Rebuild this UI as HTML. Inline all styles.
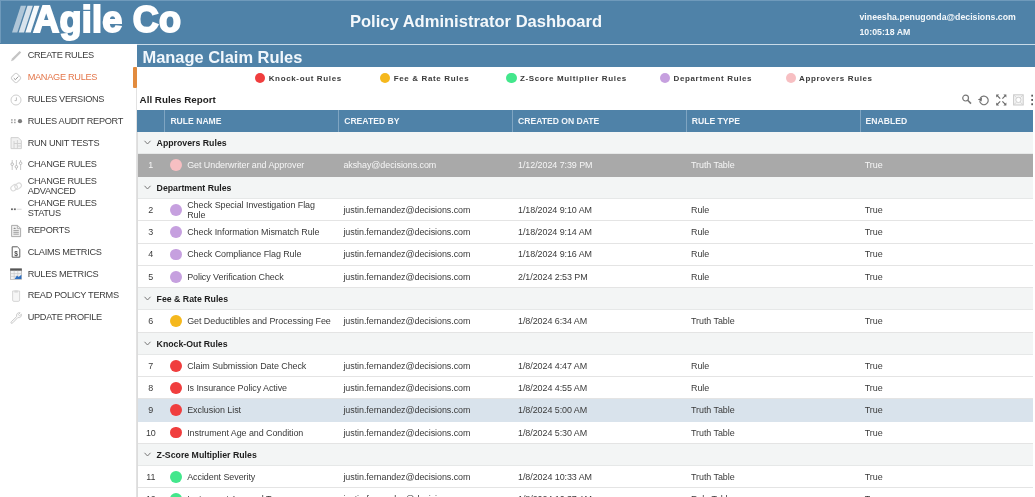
<!DOCTYPE html>
<html lang="en">
<head>
<meta charset="utf-8">
<title>Policy Administrator Dashboard</title>
<style>
*{box-sizing:border-box;margin:0;padding:0}
html,body{width:1035px;height:497px;overflow:hidden;background:#fff}
body{position:relative;filter:blur(.45px);font-family:"Liberation Sans",Arial,Helvetica,sans-serif;color:#333;font-size:8.8px}
.abs{position:absolute}
/* top header */
#hdr{left:0;top:0;width:1035px;height:43.5px;background:#4f82a8}
#hdr .edge-t{left:0;top:0;width:1035px;height:1px;background:#6f9abb}
#hdr .edge-l{left:0;top:0;width:1px;height:43px;background:#6f9abb}
#logo-slashes{left:10px;top:4px}
#logo{left:33.3px;top:-1.9px;font-weight:bold;font-size:36px;line-height:44px;color:#fff;letter-spacing:.25px;white-space:nowrap;-webkit-text-stroke:1.9px #fff}
#apptitle{left:350px;top:11.7px;font-weight:bold;font-size:16.55px;line-height:20px;color:#f4f8fb;white-space:nowrap}
#user{left:859.5px;top:11px;font-weight:bold;font-size:8.75px;line-height:12px;color:#f4f8fb;white-space:nowrap}
#time{left:859.5px;top:26px;font-weight:bold;font-size:8.75px;line-height:12px;color:#f4f8fb;white-space:nowrap}
/* page title bar */
#sepline{left:136.6px;top:43.6px;width:898px;height:1.5px;background:#c9dbe8}
#ptitle{left:136.6px;top:45px;width:898.4px;height:21.5px;background:#4f82a8;color:#f1f7fc;font-weight:bold;font-size:16.45px;line-height:24px;padding-left:5.9px;white-space:nowrap;overflow:hidden}
/* sidebar */
#side{left:0;top:45.1px;width:137px;height:453px}
#sideline{left:136px;top:66.5px;width:1px;height:431px;background:#e2e2e2}
.mi{position:relative;height:21.85px;display:flex;align-items:center;padding-left:27.7px;font-size:9.2px;line-height:9.7px;color:#3c3c3c;letter-spacing:-.3px}
.mi svg{position:absolute;left:9.2px;top:3.8px;width:14px;height:14px;overflow:visible}
.mi.on{color:#e4764a}
#marker{left:133.2px;top:66.8px;width:3.6px;height:21.7px;background:#e28b3e;border-radius:1px}
/* legend */
.lg{top:72.7px;height:10.2px;white-space:nowrap;font-weight:bold;font-size:8px;letter-spacing:.64px;line-height:11.6px;color:#3a3a3a;padding-left:13.5px}
.lg i{position:absolute;left:0;top:0;width:10.2px;height:10.2px;border-radius:50%}
/* report */
#rtitle{left:139.6px;top:93.5px;font-weight:bold;font-size:9.8px;line-height:12px;color:#1f1f1f;white-space:nowrap}
#tools{left:958px;top:92px;width:77px;height:16px}
#grid{left:137px;top:110.2px;width:896px;border-left:1px solid #dcdcdc}
.hd{height:22px;background:#4f82a8;color:#f2f6fa;font-weight:bold;font-size:8.6px;display:flex;margin-left:-1px}
.hd div{height:22px;line-height:22.6px;padding-left:5px;border-left:1px solid #7fa5c2;white-space:nowrap}
.hd div:first-child{border-left:0;width:27.4px;padding:0}
.hd div.c{width:173.8px}
.gr{height:22.27px;background:#f3f5f5;border-bottom:1px solid #e6e8e8;font-weight:bold;font-size:8.75px;color:#1d1d1d;line-height:23.4px;padding-left:18.6px;position:relative;overflow:hidden;white-space:nowrap}
.gr svg{position:absolute;left:5.5px;top:8px;width:7px;height:5px;overflow:visible}
.rw{height:22.27px;border-bottom:1px solid #e4e4e4;display:flex;align-items:center;font-size:8.95px;padding-top:.6px;color:#3a3a3a;line-height:10px;letter-spacing:-.06px;background:#fff}
.rw .n{width:25.6px;text-align:center;flex:none}
.rw .nm{width:173.8px;flex:none;display:flex;align-items:center;padding-left:6.5px}
.rw .nm i{flex:none;width:11.8px;height:11.8px;border-radius:50%;margin-right:5.3px}
.rw .nm span{display:block;width:135px}
.rw .c{width:173.8px;flex:none;padding-left:6px;white-space:nowrap}
.rw .c:nth-child(4){padding-left:6.8px}
.rw.sel{background:#a9a9a9;color:#f6f6f6;border-bottom-color:#a9a9a9}
.rw.hov{background:#d9e3ec;border-bottom-color:#d9e3ec}
.red{background:#f03e3e}.yel{background:#f5b81d}.grn{background:#43e78c}.pur{background:#c6a0df}.pnk{background:#f7bfc2}
</style>
</head>
<body>
<div id="hdr" class="abs">
  <div class="abs edge-t"></div><div class="abs edge-l"></div>
  <svg id="logo-slashes" class="abs" width="30" height="32" viewBox="0 0 30 32">
    <polygon points="2,28.4 7.3,28.4 16.1,1.8 10.8,1.8" fill="#fff" fill-opacity=".55"/>
    <polygon points="8.7,28.4 14,28.4 22.8,1.8 17.5,1.8" fill="#fff" fill-opacity=".78"/>
    <polygon points="15.4,28.4 20.7,28.4 29.5,1.8 24.2,1.8" fill="#fff" fill-opacity=".95"/>
  </svg>
  <div id="logo" class="abs">Agile Co</div>
  <div id="apptitle" class="abs">Policy Administrator Dashboard</div>
  <div id="user" class="abs">vineesha.penugonda@decisions.com</div>
  <div id="time" class="abs">10:05:18 AM</div>
</div>
<div id="sepline" class="abs"></div>
<div id="ptitle" class="abs">Manage Claim Rules</div>

<div id="side" class="abs">
  <div class="mi"><svg viewBox="0 0 14 14"><path d="M2 12.2 L3 9.6 L10.6 2 L12.2 3.6 L4.6 11.2 Z" fill="#c4c4c4"/></svg>CREATE RULES</div>
  <div class="mi on"><svg viewBox="0 0 14 14"><rect x="3.2" y="3.2" width="7.6" height="7.6" rx="1.6" transform="rotate(45 7 7)" fill="none" stroke="#cfcfcf" stroke-width="1"/><path d="M4.8 7.2 L6.4 8.7 L9.3 5.6" fill="none" stroke="#9a9a9a" stroke-width="1"/></svg>MANAGE RULES</div>
  <div class="mi"><svg viewBox="0 0 14 14"><circle cx="7" cy="7" r="5" fill="none" stroke="#cfcfcf" stroke-width="1"/><path d="M7.4 4.4 V7.6 H5.6" fill="none" stroke="#bdbdbd" stroke-width="1"/></svg>RULES VERSIONS</div>
  <div class="mi"><svg viewBox="0 0 14 14"><g fill="#9c9c9c"><rect x="2.1" y="5.2" width="1.5" height="1.5"/><rect x="2.1" y="7.7" width="1.5" height="1.5"/><rect x="5.1" y="5.2" width="1.5" height="1.5"/><rect x="5.1" y="7.7" width="1.5" height="1.5"/></g><circle cx="11" cy="7.2" r="2.1" fill="#7d7d7d"/></svg>RULES AUDIT REPORT</div>
  <div class="mi"><svg viewBox="0 0 14 14"><path d="M2 1.6 H9.2 L12.4 4.6 V12.6 H2 Z" fill="#f1f1f1" stroke="#cdcdcd" stroke-width=".9"/><path d="M5 5 V12.4 M8.4 4 V12.4 M5 7.5 H12 M8.4 10 H12" stroke="#cfcfcf" stroke-width=".9" fill="none"/></svg>RUN UNIT TESTS</div>
  <div class="mi"><svg viewBox="0 0 14 14"><path d="M3.2 2 V12 M7.4 2 V12 M11.6 2 V12" stroke="#c2c2c2" stroke-width=".9" fill="none"/><g fill="#fff" stroke="#b5b5b5" stroke-width=".9"><circle cx="3.2" cy="6.2" r="1.3"/><circle cx="7.4" cy="8.8" r="1.3"/><circle cx="11.6" cy="5.2" r="1.3"/></g></svg>CHANGE RULES</div>
  <div class="mi"><svg viewBox="0 0 14 14"><g fill="none" stroke="#dadada" stroke-width="1.1"><rect x="1.6" y="5.2" width="7" height="5" rx="2.5" transform="rotate(-38 5.1 7.7)"/><rect x="5.6" y="3.6" width="7" height="5" rx="2.5" transform="rotate(-38 9.1 6.1)"/></g></svg>CHANGE RULES<br>ADVANCED</div>
  <div class="mi"><svg viewBox="0 0 14 14"><rect x="2" y="6.4" width="1.9" height="1.7" fill="#6a6a6a"/><rect x="4.9" y="6.4" width="1.9" height="1.7" fill="#6a6a6a"/><rect x="7.6" y="6.7" width="5" height="1.1" fill="#dedede"/></svg>CHANGE RULES<br>STATUS</div>
  <div class="mi"><svg viewBox="0 0 14 14"><path d="M2.6 1.4 H8.6 L11.6 4.4 V12.6 H2.6 Z" fill="#efefef" stroke="#a4a4a4" stroke-width=".9"/><path d="M8.4 1.6 V4.6 H11.4" fill="none" stroke="#a4a4a4" stroke-width=".8"/><path d="M4.4 6.6 H9.8 M4.4 8.4 H9.8 M4.4 10.2 H9.8" stroke="#9c9c9c" stroke-width=".9"/><path d="M4.2 5 L5.8 3.4 L7 5 Z" fill="#8a8a8a"/></svg>REPORTS</div>
  <div class="mi"><svg viewBox="0 0 14 14"><path d="M3.2 1.8 H8.4 L10.8 4.2 V12.2 H3.2 Z" fill="#fff" stroke="#5c5c5c" stroke-width="1"/><text x="7" y="10.6" font-size="6.5" font-weight="bold" text-anchor="middle" fill="#4a4a4a" font-family="Liberation Sans, sans-serif">$</text></svg>CLAIMS METRICS</div>
  <div class="mi"><svg viewBox="0 0 14 14"><rect x="1.5" y="1.8" width="11" height="10.6" fill="#f3f3f3" stroke="#b9b9b9" stroke-width=".8"/><rect x="1.2" y="1.5" width="11.6" height="2.2" fill="#555"/><path d="M1.6 6.6 H12.4 M1.6 9.4 H12.4 M5.2 3.8 V12.2 M8.8 3.8 V12.2" stroke="#c9c9c9" stroke-width=".7"/><path d="M5.6 12 L8 8.6 L9.6 10 L12.4 7.8 V12 Z" fill="#2e6fc0"/></svg>RULES METRICS</div>
  <div class="mi"><svg viewBox="0 0 14 14"><path d="M3.6 2 H10.6 V11 Q10.6 12.4 9.2 12.4 H5 Q3.6 12.4 3.6 11 Z" fill="#f6f6f6" stroke="#d2d2d2" stroke-width=".9"/><rect x="5.4" y="1.4" width="3.4" height="2.2" fill="#d8d8d8"/></svg>READ POLICY TERMS</div>
  <div class="mi"><svg viewBox="0 0 14 14"><path d="M2.2 12.2 Q1.6 11.4 2.4 10.6 L7.6 5.6 Q7 3.4 8.6 2.2 Q9.8 1.4 11.2 1.8 L9.4 3.6 L10.6 4.8 L12.4 3.2 Q12.8 4.8 11.8 5.8 Q10.6 7 8.8 6.6 L3.8 11.8 Q3 12.8 2.2 12.2 Z" fill="#fafafa" stroke="#c6c6c6" stroke-width=".9"/></svg>UPDATE PROFILE</div>
</div>
<div id="sideline" class="abs"></div>
<div id="marker" class="abs"></div>

<div class="abs lg" style="left:255.2px"><i class="red"></i>Knock-out Rules</div>
<div class="abs lg" style="left:380.2px"><i class="yel"></i>Fee &amp; Rate Rules</div>
<div class="abs lg" style="left:506.4px"><i class="grn"></i>Z-Score Multiplier Rules</div>
<div class="abs lg" style="left:660px"><i class="pur"></i>Department Rules</div>
<div class="abs lg" style="left:785.6px"><i class="pnk"></i>Approvers Rules</div>

<div id="rtitle" class="abs">All Rules Report</div>
<svg id="tools" class="abs" viewBox="0 0 77 16">
  <g fill="none" stroke="#787878" stroke-width="1.2">
    <circle cx="7.6" cy="6.1" r="2.9"/><path d="M9.7 8.3 L13 11.6" stroke-width="1.6"/>
    <path d="M22.2 6.3 A4.3 4.3 0 1 1 21.7 9.2"/>
  </g>
  <path d="M19.8 7.6 L24 5.4 L23.6 9.4 Z" fill="#6b6b6b"/>
  <g stroke="#6b6b6b" stroke-width="1.2" fill="none">
    <path d="M39 3.4 L42.2 6.6 M47.6 3.4 L44.4 6.6 M39 12.6 L42.2 9.4 M47.6 12.6 L44.4 9.4"/>
  </g>
  <g fill="#6b6b6b">
    <path d="M38.2 2.6 H41.2 L38.2 5.6 Z"/><path d="M48.4 2.6 H45.4 L48.4 5.6 Z"/><path d="M38.2 13.4 H41.2 L38.2 10.4 Z"/><path d="M48.4 13.4 H45.4 L48.4 10.4 Z"/>
  </g>
  <rect x="55.6" y="2.8" width="9.6" height="10.2" fill="#f4f4f4" stroke="#c9c9c9" stroke-width="1"/>
  <circle cx="60.4" cy="7.9" r="2.6" fill="#fff" stroke="#cfcfcf" stroke-width="1"/>
  <path d="M56 3.2 L58.4 5.6 M64.8 3.2 L62.4 5.6 M56 12.6 L58.4 10.2 M64.8 12.6 L62.4 10.2" stroke="#d0d0d0" stroke-width=".9"/>
  <g fill="#555"><rect x="73.3" y="2.7" width="1.7" height="1.9"/><rect x="73.3" y="7" width="1.7" height="1.9"/><rect x="73.3" y="11.3" width="1.7" height="1.9"/></g>
</svg>

<div id="grid" class="abs">
  <div class="hd"><div></div><div class="c">RULE NAME</div><div class="c">CREATED BY</div><div class="c">CREATED ON DATE</div><div class="c">RULE TYPE</div><div class="c" style="width:172px">ENABLED</div></div>
  <div class="gr"><svg viewBox="0 0 7 5"><path d="M.5 .8 L3.5 4 L6.5 .8" fill="none" stroke="#777" stroke-width="1"/></svg>Approvers Rules</div>
  <div class="rw sel"><div class="n">1</div><div class="nm"><i class="pnk"></i><span>Get Underwriter and Approver</span></div><div class="c">akshay@decisions.com</div><div class="c">1/12/2024 7:39 PM</div><div class="c">Truth Table</div><div class="c">True</div></div>
  <div class="gr"><svg viewBox="0 0 7 5"><path d="M.5 .8 L3.5 4 L6.5 .8" fill="none" stroke="#777" stroke-width="1"/></svg>Department Rules</div>
  <div class="rw"><div class="n">2</div><div class="nm"><i class="pur"></i><span>Check Special Investigation Flag Rule</span></div><div class="c">justin.fernandez@decisions.com</div><div class="c">1/18/2024 9:10 AM</div><div class="c">Rule</div><div class="c">True</div></div>
  <div class="rw"><div class="n">3</div><div class="nm"><i class="pur"></i><span>Check Information Mismatch Rule</span></div><div class="c">justin.fernandez@decisions.com</div><div class="c">1/18/2024 9:14 AM</div><div class="c">Rule</div><div class="c">True</div></div>
  <div class="rw"><div class="n">4</div><div class="nm"><i class="pur"></i><span>Check Compliance Flag Rule</span></div><div class="c">justin.fernandez@decisions.com</div><div class="c">1/18/2024 9:16 AM</div><div class="c">Rule</div><div class="c">True</div></div>
  <div class="rw"><div class="n">5</div><div class="nm"><i class="pur"></i><span>Policy Verification Check</span></div><div class="c">justin.fernandez@decisions.com</div><div class="c">2/1/2024 2:53 PM</div><div class="c">Rule</div><div class="c">True</div></div>
  <div class="gr"><svg viewBox="0 0 7 5"><path d="M.5 .8 L3.5 4 L6.5 .8" fill="none" stroke="#777" stroke-width="1"/></svg>Fee &amp; Rate Rules</div>
  <div class="rw"><div class="n">6</div><div class="nm"><i class="yel"></i><span style="width:150px;white-space:nowrap">Get Deductibles and Processing Fee</span></div><div class="c">justin.fernandez@decisions.com</div><div class="c">1/8/2024 6:34 AM</div><div class="c">Truth Table</div><div class="c">True</div></div>
  <div class="gr"><svg viewBox="0 0 7 5"><path d="M.5 .8 L3.5 4 L6.5 .8" fill="none" stroke="#777" stroke-width="1"/></svg>Knock-Out Rules</div>
  <div class="rw"><div class="n">7</div><div class="nm"><i class="red"></i><span>Claim Submission Date Check</span></div><div class="c">justin.fernandez@decisions.com</div><div class="c">1/8/2024 4:47 AM</div><div class="c">Rule</div><div class="c">True</div></div>
  <div class="rw"><div class="n">8</div><div class="nm"><i class="red"></i><span>Is Insurance Policy Active</span></div><div class="c">justin.fernandez@decisions.com</div><div class="c">1/8/2024 4:55 AM</div><div class="c">Rule</div><div class="c">True</div></div>
  <div class="rw hov"><div class="n">9</div><div class="nm"><i class="red"></i><span>Exclusion List</span></div><div class="c">justin.fernandez@decisions.com</div><div class="c">1/8/2024 5:00 AM</div><div class="c">Truth Table</div><div class="c">True</div></div>
  <div class="rw"><div class="n">10</div><div class="nm"><i class="red"></i><span>Instrument Age and Condition</span></div><div class="c">justin.fernandez@decisions.com</div><div class="c">1/8/2024 5:30 AM</div><div class="c">Truth Table</div><div class="c">True</div></div>
  <div class="gr"><svg viewBox="0 0 7 5"><path d="M.5 .8 L3.5 4 L6.5 .8" fill="none" stroke="#777" stroke-width="1"/></svg>Z-Score Multiplier Rules</div>
  <div class="rw"><div class="n">11</div><div class="nm"><i class="grn"></i><span>Accident Severity</span></div><div class="c">justin.fernandez@decisions.com</div><div class="c">1/8/2024 10:33 AM</div><div class="c">Truth Table</div><div class="c">True</div></div>
  <div class="rw"><div class="n">12</div><div class="nm"><i class="grn"></i><span>Instrument Age and Type</span></div><div class="c">justin.fernandez@decisions.com</div><div class="c">1/8/2024 10:37 AM</div><div class="c">Rule Table</div><div class="c">True</div></div>
</div>
</body>
</html>
